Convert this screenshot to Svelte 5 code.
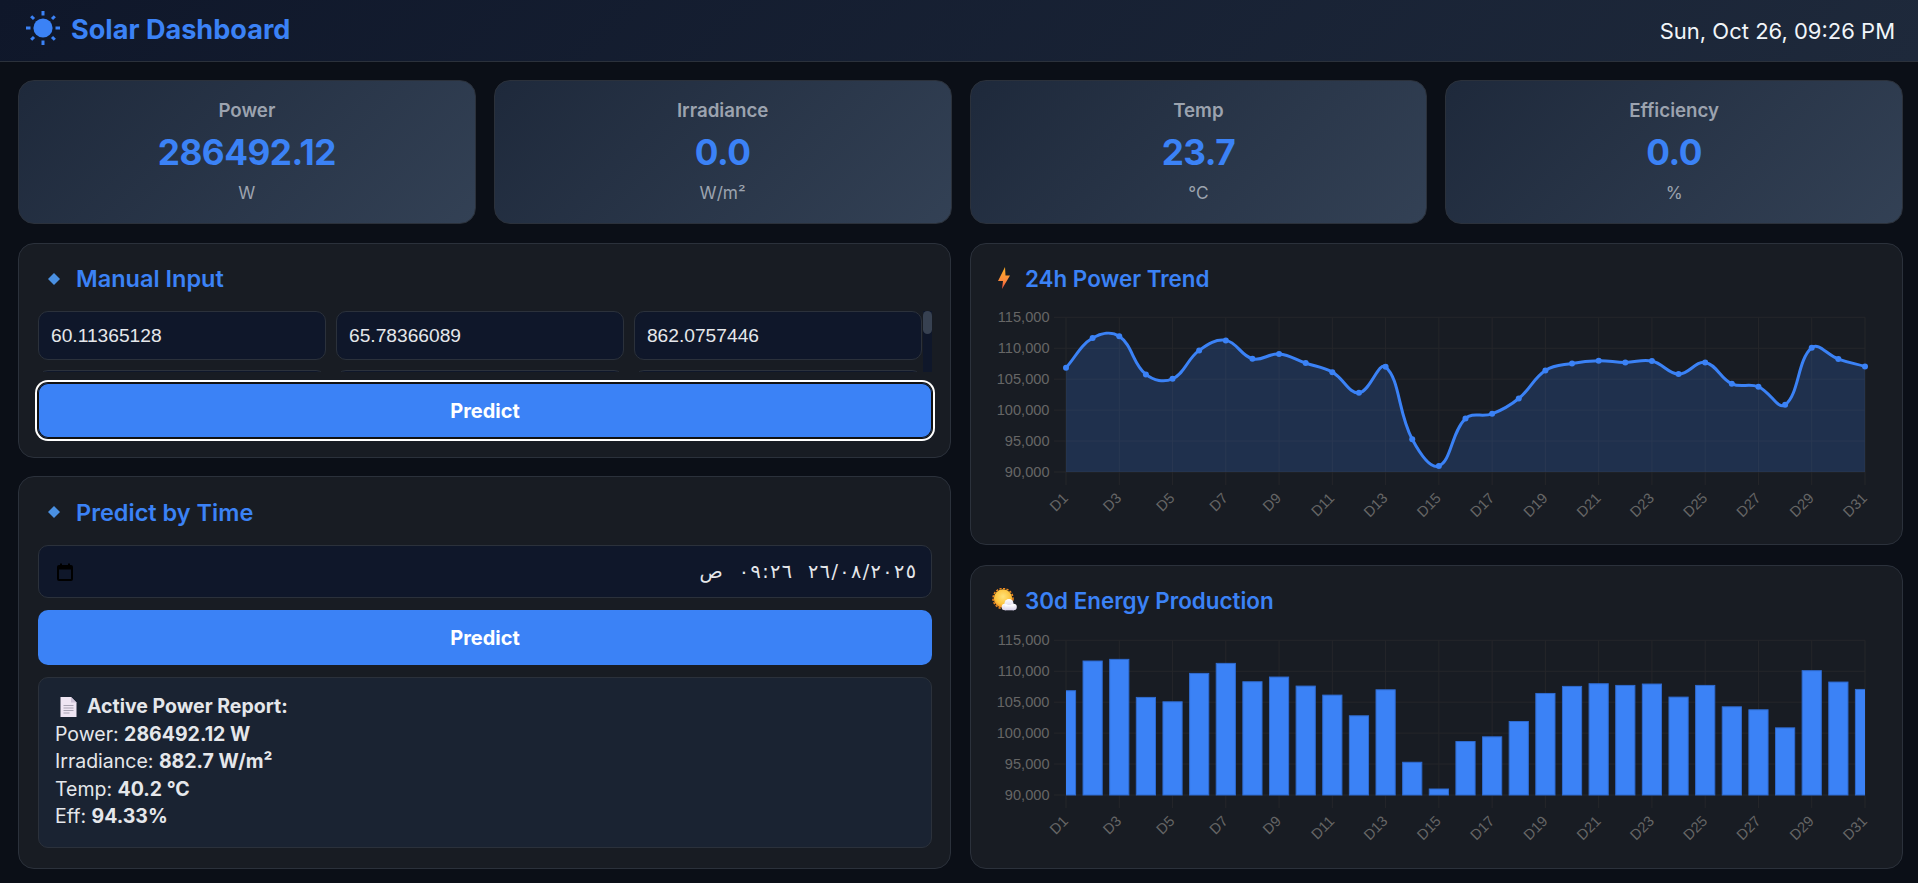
<script>
  const kpis = [
    { label: 'Power', value: '286492.12', unit: 'W' },
    { label: 'Irradiance', value: '0.0', unit: 'W/m²' },
    { label: 'Temp', value: '23.7', unit: '°C' },
    { label: 'Efficiency', value: '0.0', unit: '%' }
  ];
  const inputs = ['60.11365128', '65.78366089', '862.0757446', '41.2', '1013.5', '3.82', '27.4', '0.91', '118.6'];
  const dateTokens = ['ص', '٠٩:٢٦', '٢٦/٠٨/٢٠٢٥'];
  const data = [106850, 111650, 111920, 105770, 105060, 109650, 111270, 108300, 109060, 107600, 106140, 102800, 107000, 95290, 90970, 98640, 99400, 101880, 106410, 107550, 107980, 107710, 107930, 105820, 107710, 104250, 103770, 100850, 110090, 108250, 107060];

  const X0 = 76, X1 = 875, Y0 = 23.3, Y1 = 178;
  const step = (X1 - X0) / 30;
  const px = (i) => X0 + i * step;
  const py = (v) => Y1 - ((v - 90000) / 25000) * (Y1 - Y0);
  const yTicks = [115000, 110000, 105000, 100000, 95000, 90000];
  const xTicks = data.map((_, i) => i).filter((i) => i % 2 === 0);
  const pts = data.map((v, i) => ({ x: px(i), y: py(v) }));

  function spline(points, t) {
    const ctrl = points.map((cur, i) => {
      const prev = points[i - 1] ?? cur;
      const next = points[i + 1] ?? cur;
      const d01 = Math.hypot(cur.x - prev.x, cur.y - prev.y);
      const d12 = Math.hypot(next.x - cur.x, next.y - cur.y);
      const s01 = d01 / (d01 + d12) || 0;
      const s12 = d12 / (d01 + d12) || 0;
      return {
        px: cur.x - t * s01 * (next.x - prev.x),
        py: Math.min(Y1, cur.y - t * s01 * (next.y - prev.y)),
        nx: cur.x + t * s12 * (next.x - prev.x),
        ny: Math.min(Y1, cur.y + t * s12 * (next.y - prev.y))
      };
    });
    let d = `M${points[0].x} ${points[0].y}`;
    for (let i = 1; i < points.length; i++) {
      d += ` C${ctrl[i - 1].nx} ${ctrl[i - 1].ny} ${ctrl[i].px} ${ctrl[i].py} ${points[i].x} ${points[i].y}`;
    }
    return d;
  }
  const linePath = spline(pts, 0.4);
  const areaPath = `${linePath} L${X1} ${Y1} L${X0} ${Y1} Z`;
  const barW = step * 0.72;
</script>

{#snippet diamond()}
  <svg class="t-icon" width="38" height="14" viewBox="0 0 38 14" aria-hidden="true">
    <path d="M16 1 L22 7 L16 13 L10 7 Z" fill="#4a90e2" />
  </svg>
{/snippet}

{#snippet axes()}
  {#each yTicks as v}
    <line class="grid" x1={X0 - 12} x2={X1} y1={py(v)} y2={py(v)} />
    <text class="tick" x={X0 - 16.5} y={py(v) + 5} text-anchor="end">{v.toLocaleString('en-US')}</text>
  {/each}
  {#each xTicks as i}
    <line class="grid" x1={px(i)} x2={px(i)} y1={Y0} y2={Y1 + 13} />
    <text class="tick" text-anchor="end" transform="translate({px(i) + 3} {Y1 + 27}) rotate(-45)">D{i + 1}</text>
  {/each}
{/snippet}

<header class="top">
  <div class="brand">
    <svg class="sun" width="36" height="36" viewBox="0 0 36 36" aria-hidden="true">
      <circle cx="18" cy="18" r="9.6" fill="#3b82f6" />
      <g stroke="#3b82f6" stroke-width="3">
        <line x1="18" y1="1" x2="18" y2="5.5" />
        <line x1="18" y1="30.5" x2="18" y2="35" />
        <line x1="1" y1="18" x2="5.5" y2="18" />
        <line x1="30.5" y1="18" x2="35" y2="18" />
        <line x1="6.2" y1="6.2" x2="9" y2="9" />
        <line x1="27" y1="27" x2="29.8" y2="29.8" />
        <line x1="29.8" y1="6.2" x2="27" y2="9" />
        <line x1="9" y1="27" x2="6.2" y2="29.8" />
      </g>
    </svg>
    <h1>Solar Dashboard</h1>
  </div>
  <div class="clock">Sun, Oct 26, 09:26 PM</div>
</header>

<main class="page">
  <section class="kpis">
    {#each kpis as k}
      <div class="kpi">
        <div class="kpi-label">{k.label}</div>
        <div class="kpi-value">{k.value}</div>
        <div class="kpi-unit">{k.unit}</div>
      </div>
    {/each}
  </section>

  <section class="columns">
    <div class="col left">
      <div class="card">
        <h2 class="title">{@render diamond()}Manual Input</h2>
        <div class="scroller">
          <div class="inputs">
            {#each inputs as v}
              <input class="field" type="text" value={v} />
            {/each}
          </div>
          <div class="track"><div class="thumb"></div></div>
        </div>
        <button class="btn focused" type="button">Predict</button>
      </div>

      <div class="card grow">
        <h2 class="title">{@render diamond()}Predict by Time</h2>
        <div class="date">
          <svg width="16" height="18" viewBox="0 0 16 18" aria-hidden="true">
            <path d="M4 0.5 V3 M12 0.5 V3" stroke="#000" stroke-width="2" />
            <rect x="1" y="3" width="14" height="14" rx="1" fill="none" stroke="#000" stroke-width="2" />
            <rect x="1" y="3" width="14" height="3.5" fill="#000" />
          </svg>
          <div class="date-text" dir="ltr">
            {#each dateTokens as token}
              <span class="date-token">
                {#each [...token] as ch}<span>{ch}</span>{/each}
              </span>
            {/each}
          </div>
        </div>
        <button class="btn" type="button">Predict</button>
        <div class="report">
          <div class="report-head">
            <svg width="17" height="20" viewBox="0 0 17 20" aria-hidden="true">
              <path d="M0.5 0 H11 L16.5 5.5 V20 H0.5 Z" fill="#efe5f3" />
              <path d="M11 0 L16.5 5.5 H11 Z" fill="#cfc3d8" />
              <path d="M3.5 8.5 H13.5 M3.5 11 H13.5 M3.5 13.5 H13.5 M3.5 16 H9.5" stroke="#a9a3b3" stroke-width="1" />
            </svg>
            <strong>Active Power Report:</strong>
          </div>
          <div>Power: <strong>286492.12 W</strong></div>
          <div>Irradiance: <strong>882.7 W/m²</strong></div>
          <div>Temp: <strong>40.2 °C</strong></div>
          <div>Eff: <strong>94.33%</strong></div>
        </div>
      </div>
    </div>

    <div class="col right">
      <div class="card chart-card">
        <h2 class="title">
          <svg class="t-icon" width="35" height="24" viewBox="0 0 35 24" aria-hidden="true">
            <defs>
              <linearGradient id="bolt" x1="0" y1="0" x2="0" y2="1">
                <stop offset="0" stop-color="#fdb022" />
                <stop offset="0.6" stop-color="#fb8a3c" />
                <stop offset="1" stop-color="#ef4d3c" />
              </linearGradient>
            </defs>
            <path d="M15 1 L8 15 H13 L12 23 L20 9.5 H15.5 Z" fill="url(#bolt)" />
          </svg>
          24h Power Trend
        </h2>
        <svg class="chart" width="893" height="231" viewBox="0 0 893 231" role="img" aria-label="24h power trend line chart">
          {@render axes()}
          <path d={areaPath} fill="rgba(59,130,246,0.2)" />
          <path d={linePath} fill="none" stroke="#3b82f6" stroke-width="3" />
          {#each pts as p}
            <circle cx={p.x} cy={p.y} r="3" fill="#3b82f6" />
          {/each}
        </svg>
      </div>

      <div class="card chart-card second">
        <h2 class="title">
          <svg class="t-icon" width="35" height="24" viewBox="0 0 35 24" aria-hidden="true">
            <defs>
              <radialGradient id="sun" cx="0.5" cy="0.4" r="0.6">
                <stop offset="0" stop-color="#ffe27a" />
                <stop offset="0.7" stop-color="#fcc33c" />
                <stop offset="1" stop-color="#f28c1f" />
              </radialGradient>
              <linearGradient id="cloud" x1="0" y1="0" x2="0" y2="1">
                <stop offset="0" stop-color="#ffffff" />
                <stop offset="1" stop-color="#d5cfe8" />
              </linearGradient>
            </defs>
            <circle cx="13" cy="10.5" r="9.2" fill="url(#sun)" />
            <circle cx="13" cy="10.5" r="10" fill="none" stroke="#f28c1f" stroke-width="1.5" stroke-dasharray="2.2 1.4" />
            <g fill="url(#cloud)">
              <circle cx="19" cy="15.5" r="4.5" />
              <circle cx="15" cy="19" r="3.3" />
              <circle cx="23.5" cy="19" r="3.3" />
              <rect x="15" y="17" width="9" height="5.3" />
            </g>
          </svg>
          30d Energy Production
        </h2>
        <svg class="chart" width="893" height="231" viewBox="0 0 893 231" role="img" aria-label="30 day energy production bar chart">
          {@render axes()}
          <clipPath id="plot"><rect x={X0} y={Y0} width={X1 - X0} height={Y1 - Y0 + 1} /></clipPath>
          <g clip-path="url(#plot)">
            {#each pts as p}
              <rect class="bar" x={p.x - barW / 2} y={p.y} width={barW} height={Y1 - p.y} />
            {/each}
          </g>
        </svg>
      </div>
    </div>
  </section>
</main>

<style>
  :global(body) {
    margin: 0;
    background: #0b0f17;
    color: #e5e7eb;
    font-family: Inter, 'Liberation Sans', sans-serif;
  }
  .top {
    height: 61px;
    display: flex;
    align-items: center;
    justify-content: space-between;
    padding: 0 23px 0 25px;
    background: linear-gradient(135deg, #0f172a, #1e293b);
    border-bottom: 1px solid #2b313b;
  }
  .brand {
    display: flex;
    align-items: center;
    gap: 10px;
  }
  .sun {
    margin-bottom: 5px;
  }
  h1 {
    margin: 0 0 2px;
    font-size: 27.1px;
    font-weight: 700;
    color: #3b82f6;
  }
  .clock {
    font-size: 22px;
    color: #f1f5f9;
  }
  .page {
    padding: 18px 15px 14px 18px;
  }
  .kpis {
    display: grid;
    grid-template-columns: repeat(4, 1fr);
    gap: 18px;
  }
  .kpi {
    height: 143.5px;
    box-sizing: border-box;
    padding-top: 17px;
    text-align: center;
    border: 1px solid #2b313b;
    border-radius: 16px;
    background: linear-gradient(135deg, #1e293b, #334155);
  }
  .kpi-label {
    font-size: 18.7px;
    font-weight: 600;
    line-height: 26px;
    color: #9ca3af;
  }
  .kpi-value {
    font-size: 35.2px;
    font-weight: 700;
    letter-spacing: -0.5px;
    line-height: 46px;
    margin-top: 5px;
    color: #3b82f6;
  }
  .kpi-unit {
    font-size: 17.3px;
    line-height: 24px;
    margin-top: 6px;
    color: #9ca3af;
  }
  .columns {
    display: grid;
    grid-template-columns: 1fr 1fr;
    gap: 19px;
    margin-top: 19.5px;
  }
  .col {
    display: flex;
    flex-direction: column;
    min-width: 0;
  }
  .left {
    gap: 18px;
  }
  .right {
    gap: 20px;
  }
  .card {
    box-sizing: border-box;
    padding: 19px;
    border: 1px solid #2b313b;
    border-radius: 16px;
    background: #181c23;
  }
  .left .card {
    padding-right: 18px;
  }
  .grow {
    height: 392.5px;
  }
  .title {
    display: flex;
    align-items: center;
    margin: 0 0 17px;
    height: 31px;
    font-size: 23.5px;
    font-weight: 600;
    color: #3b82f6;
  }
  .grow .title {
    height: 32px;
    margin-bottom: 17.3px;
  }
  .t-icon {
    flex: none;
  }
  .chart-card {
    height: 302px;
  }
  .chart-card.second {
    height: 303.5px;
  }
  .chart-card .title {
    height: 30px;
    margin-bottom: 1px;
    font-size: 22.4px;
  }
  .chart-card.second .title {
    margin-bottom: 2px;
  }
  .chart {
    display: block;
    overflow: visible;
  }
  .grid {
    stroke: #25262a;
    stroke-width: 1;
  }
  .tick {
    font-family: 'Liberation Sans', Arial, sans-serif;
    font-size: 14.6px;
    fill: #666;
  }
  .bar {
    fill: #3b82f6;
    stroke: #2f6bd0;
    stroke-width: 1;
  }
  .scroller {
    position: relative;
    height: 61px;
    overflow: hidden;
    padding-right: 9.7px;
  }
  .inputs {
    display: grid;
    grid-template-columns: repeat(3, 1fr);
    gap: 9.6px;
  }
  .track {
    position: absolute;
    top: 0;
    right: 0;
    width: 9px;
    height: 100%;
    background: #0f172a;
  }
  .thumb {
    height: 22.7px;
    border-radius: 5px;
    background: #374151;
  }
  .field {
    box-sizing: border-box;
    width: 100%;
    min-width: 0;
    height: 49.3px;
    padding: 0 12px;
    border: 1px solid #2b313b;
    border-radius: 10px;
    background: #0f172a;
    color: #e5e7eb;
    font-family: 'Liberation Sans', Arial, sans-serif;
    font-size: 19.2px;
  }
  .btn {
    display: block;
    width: 100%;
    height: 55px;
    border: 0;
    border-radius: 10px;
    background: #3b82f6;
    color: #fff;
    font-family: Inter, sans-serif;
    font-size: 20px;
    font-weight: 700;
  }
  .focused {
    margin-top: 11px;
    box-shadow: inset 0 0 0 1px #111, 0 0 0 1px #111, 0 0 0 3px #fff;
  }
  .date {
    box-sizing: border-box;
    height: 52.5px;
    display: flex;
    align-items: center;
    justify-content: space-between;
    padding: 0 15px 0 18px;
    border: 1px solid #2b313b;
    border-radius: 10px;
    background: #0f172a;
  }
  .date-text {
    display: flex;
    gap: 16px;
    font-family: 'DejaVu Sans', sans-serif;
    font-size: 19.2px;
    color: #e5e7eb;
  }
  .date-token {
    display: inline-flex;
    gap: 1.4px;
  }
  .date + .btn {
    margin-top: 12.5px;
  }
  .report {
    box-sizing: border-box;
    height: 171px;
    margin-top: 12px;
    padding: 15px 16px;
    border: 1px solid #2b313b;
    border-radius: 10px;
    background: #1a2332;
    font-size: 19.5px;
    line-height: 27.5px;
  }
  .report strong {
    font-weight: 700;
  }
  .report-head {
    display: flex;
    align-items: center;
    gap: 10px;
    padding-left: 5px;
  }
</style>
